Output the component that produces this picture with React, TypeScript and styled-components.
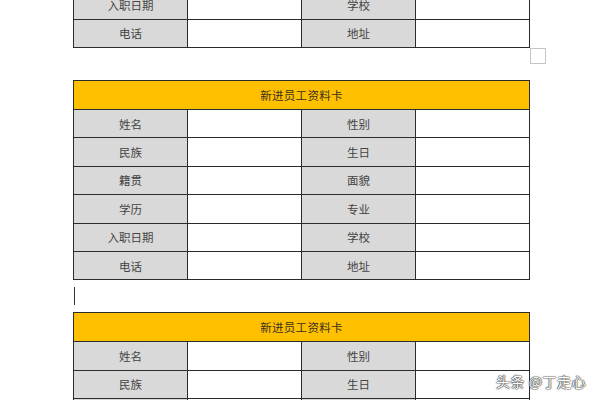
import React from "react";
import styled, { createGlobalStyle } from "styled-components";

const Global = createGlobalStyle`
  html, body { margin: 0; padding: 0; background: #ffffff; overflow: hidden; }
  body { font-family: "Noto Sans CJK SC", "Noto Sans", sans-serif; }
`;

const Viewport = styled.div`
  position: relative;
  width: 600px;
  height: 400px;
  overflow: hidden;
  background: #ffffff;
`;

const Page = styled.div`
  margin-top: -152.4px;
  padding-left: 73px;
  display: flex;
  flex-direction: column;
`;

const Card = styled.div`
  display: grid;
  grid-template-columns: repeat(4, 114px);
  width: 457px;
  box-sizing: border-box;
  border-top: 1px solid #2b2b2b;
  border-left: 1px solid #2b2b2b;
`;

const Header = styled.div`
  grid-column: 1 / span 4;
  height: 29px;
  box-sizing: border-box;
  background: #ffc000;
  border-right: 1px solid #2b2b2b;
  border-bottom: 1px solid #2b2b2b;
  display: flex;
  align-items: center;
  justify-content: center;
  font-size: 11.5px;
  color: #3a3020;
  letter-spacing: 0.3px;
`;

const Cell = styled.div<{ $label?: boolean }>`
  height: 28.4px;
  box-sizing: border-box;
  background: ${(p) => (p.$label ? "#d9d9d9" : "#ffffff")};
  border-right: 1px solid #2b2b2b;
  border-bottom: 1px solid #2b2b2b;
  display: flex;
  align-items: center;
  justify-content: center;
  font-size: 11.5px;
  color: #444;
`;

const Gap = styled.div`
  height: 32px;
  display: flex;
  align-items: flex-start;
`;

const Spacer = styled.div`
  width: 457px;
  flex: none;
`;

const AnchorBox = styled.div`
  width: 16px;
  height: 16px;
  box-sizing: border-box;
  border: 1px solid #c4c4c4;
  background: #fff;
`;

const Caret = styled.div`
  width: 1px;
  height: 18px;
  margin-top: 7px;
  margin-left: 1px;
  background: #333;
`;

const Watermark = styled.div`
  position: absolute;
  left: 496px;
  top: 371px;
  font-size: 14px;
  color: #ffffff;
  letter-spacing: 0.5px;
  text-shadow: 0 0 1px #444, 0 0 1px #444, 0 0 1px #444, 0 0 2px #666;
  white-space: nowrap;
`;

const rows: [string, string][] = [
  ["姓名", "性别"],
  ["民族", "生日"],
  ["籍贯", "面貌"],
  ["学历", "专业"],
  ["入职日期", "学校"],
  ["电话", "地址"],
];

function InfoCard() {
  return (
    <Card>
      <Header>新进员工资料卡</Header>
      {rows.map(([a, b]) => (
        <React.Fragment key={a}>
          <Cell $label>{a}</Cell>
          <Cell />
          <Cell $label>{b}</Cell>
          <Cell />
        </React.Fragment>
      ))}
    </Card>
  );
}

export default function App() {
  return (
    <>
      <Global />
      <Viewport>
        <Page>
          <InfoCard />
          <Gap>
            <Spacer />
            <AnchorBox />
          </Gap>
          <InfoCard />
          <Gap>
            <Caret />
          </Gap>
          <InfoCard />
        </Page>
        <Watermark>头条 @丁走心</Watermark>
      </Viewport>
    </>
  );
}
